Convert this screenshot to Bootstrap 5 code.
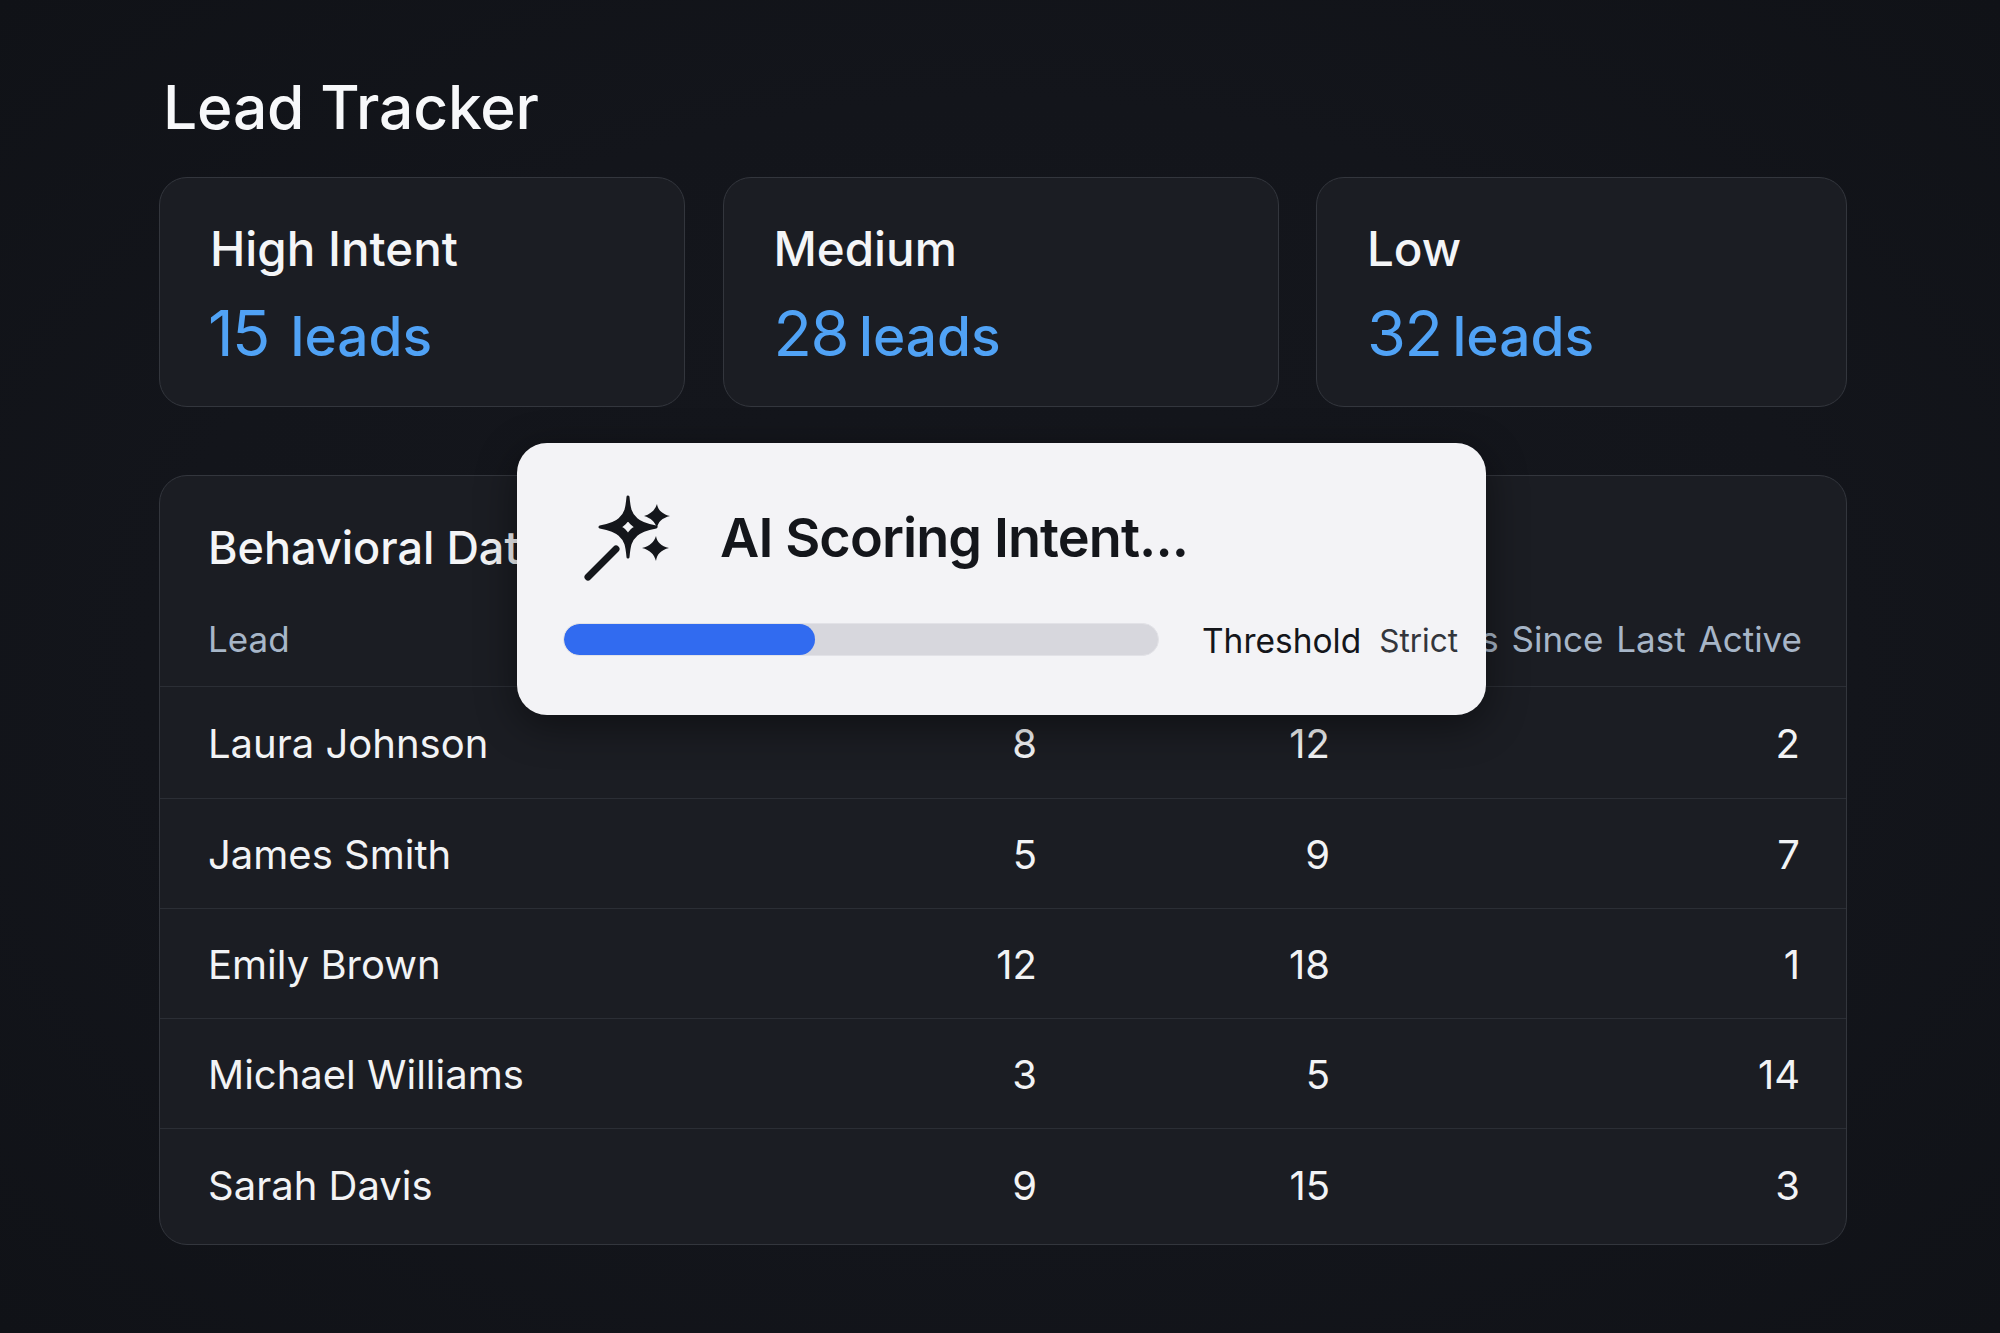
<!DOCTYPE html>
<html lang="en">
<head>
  <meta charset="UTF-8" />
  <meta name="viewport" content="width=device-width, initial-scale=1" />
  <title>Lead Tracker</title>
  <link href="https://cdn.jsdelivr.net/npm/bootstrap@5.3.0/dist/css/bootstrap.min.css" rel="stylesheet" />
  <style>
    body { font-family: Inter, "Liberation Sans", sans-serif; color: #f4f5f7; min-height: 1333px; background: radial-gradient(ellipse at 50% 50%, #15171d 0%, #13151b 60%, #101217 100%); }
    .page-wrap { padding: 71px 153px 0 159px; }
    .page-title { font-size: 60.5px; font-weight: 500; line-height: 72px; margin: 0 0 34px 4px; letter-spacing: -.2px; color: #f7f8fa; }
    .stat-grid { display: grid; grid-template-columns: 526fr 556fr 531fr; gap: 37.5px; margin-bottom: 68px; }
    .stat-box { background: #1b1d23; border: 1.5px solid #33363d; border-radius: 28px; height: 230px; padding: 43px 50px 0; color: #f4f5f7; }
    .stat-name { font-size: 47.5px; font-weight: 500; line-height: 56px; }
    .stat-val { font-size: 55px; font-weight: 500; line-height: 72px; color: #50a2f5; margin-top: 20px; }
    .stat-num { font-size: 63px; font-weight: 400; letter-spacing: -1.5px; margin-right: -3.5px; }
    .num-narrow { margin-left: -2px; margin-right: 7px; }
    .data-box { background: #1b1d23; border: 1.5px solid #33363d; border-radius: 28px; height: 770px; overflow: hidden; color: #f4f5f7; }
    .data-head { font-size: 45px; font-weight: 500; line-height: 56px; padding: 44px 48px 0; color: #f4f5f7; }
    .lead-table { --bs-table-bg: transparent; --bs-table-color: #f2f3f5; --bs-table-border-color: #2b2e35; table-layout: fixed; margin: 0; font-size: 40px; }
    .lead-table th { font-size: 35px; font-weight: 400; color: #a7b6c8; height: 110px; padding: 17px 46px 0 0; vertical-align: middle; white-space: nowrap; word-spacing: 3px; }
    .lead-table th:last-child { padding-right: 44px; }
    .lead-table td { height: 110px; padding: 4px 46px 0 0; vertical-align: middle; }
    .lead-table tr:first-child td { height: 112px; }
    .lead-table tr:last-child td { border-bottom: 0; height: 116px; padding-top: 0; }
    .lead-table th:first-child, .lead-table td:first-child { padding-left: 48px; }
    .col-lead { width: 630px; }
    .col-count { width: 293px; }
    .scoring-pop { position: absolute; left: 517px; top: 443px; width: 969px; height: 272px; background: #f3f3f6; border-radius: 30px; box-shadow: 0 10px 40px rgba(0,0,0,.45); padding: 0 24px 0 46px; color: #14161b; }
    .pop-title { font-size: 54px; font-weight: 600; letter-spacing: -.9px; line-height: 64px; margin-top: 16px; }
    .pop-wand { width: 90px; height: 95px; margin-left: 17px; margin-right: 50px; }
    .pop-top { padding-top: 47px; height: 169px; }
    .pop-bar { --bs-progress-bg: #d7d7dd; --bs-progress-bar-bg: #316bf0; --bs-progress-border-radius: 17px; height: 33px; width: 596px; border: 1px solid #e2e2e7; }
    .pop-bar .progress-bar { border-radius: 17px; }
    .pop-thresh { font-size: 33.5px; margin-left: 43px; padding-top: 4px; }
    .pop-strict { font-size: 31.5px; margin-left: 18px; padding-top: 3px; color: #33363c; }
  </style>
</head>
<body>
  <main class="page-wrap position-relative">
    <h1 class="page-title">Lead Tracker</h1>

    <!-- Intent counts -->
    <section class="stat-grid">
      <div class="card stat-box">
        <div class="stat-name">High Intent</div>
        <div class="stat-val"><span class="stat-num num-narrow">15</span> leads</div>
      </div>
      <div class="card stat-box">
        <div class="stat-name">Medium</div>
        <div class="stat-val"><span class="stat-num">28</span> leads</div>
      </div>
      <div class="card stat-box">
        <div class="stat-name">Low</div>
        <div class="stat-val"><span class="stat-num">32</span> leads</div>
      </div>
    </section>

    <!-- Behavioral table -->
    <section class="card data-box">
      <div class="data-head">Behavioral Data</div>
      <table class="table lead-table">
        <colgroup><col class="col-lead" /><col class="col-count" /><col class="col-count" /><col /></colgroup>
        <thead>
          <tr><th>Lead</th><th></th><th></th><th class="text-end">Days Since Last Active</th></tr>
        </thead>
        <tbody>
          <tr><td>Laura Johnson</td><td class="text-end">8</td><td class="text-end">12</td><td class="text-end">2</td></tr>
          <tr><td>James Smith</td><td class="text-end">5</td><td class="text-end">9</td><td class="text-end">7</td></tr>
          <tr><td>Emily Brown</td><td class="text-end">12</td><td class="text-end">18</td><td class="text-end">1</td></tr>
          <tr><td>Michael Williams</td><td class="text-end">3</td><td class="text-end">5</td><td class="text-end">14</td></tr>
          <tr><td>Sarah Davis</td><td class="text-end">9</td><td class="text-end">15</td><td class="text-end">3</td></tr>
        </tbody>
      </table>
    </section>

    <!-- Scoring popup -->
    <div class="scoring-pop">
      <div class="d-flex align-items-start pop-top">
        <svg class="pop-wand flex-shrink-0" viewBox="0 0 90 95" fill="#14161b">
          <path fill-rule="evenodd" stroke="#14161b" stroke-width="3" stroke-linejoin="round" d="M48 7 C49 18 50 24 56 29 C60 33 66 35 76 37 C66 39 60 41 56 45 C50 50 49 56 48 67 C47 56 46 50 40 45 C36 41 30 39 20 37 C30 35 36 33 40 29 C46 24 47 18 48 7 Z M48 28 C46 33 44 35 39 37 C44 39 46 41 48 46 C50 41 52 39 57 37 C52 35 50 33 48 28 Z" />
          <path d="M77 14 C78 20 82 24 90 26 C82 28 78 32 77 38 C75 32 71 28 64 26 C71 24 75 20 77 14 Z" />
          <path d="M76 46 C77 52 81 56 89 58 C81 60 77 64 76 71 C74 64 70 60 62 58 C70 56 74 52 76 46 Z" />
          <path d="M8 87 L36 59" stroke="#14161b" stroke-width="7" stroke-linecap="round" />
        </svg>
        <div class="pop-title">AI Scoring Intent...</div>
      </div>
      <div class="d-flex align-items-center">
        <div class="progress pop-bar flex-shrink-0">
          <div class="progress-bar" style="width: 42.3%"></div>
        </div>
        <span class="pop-thresh">Threshold</span>
        <span class="pop-strict">Strict</span>
      </div>
    </div>
  </main>

  <script src="https://cdn.jsdelivr.net/npm/bootstrap@5.3.0/dist/js/bootstrap.bundle.min.js"></script>
</body>
</html>
